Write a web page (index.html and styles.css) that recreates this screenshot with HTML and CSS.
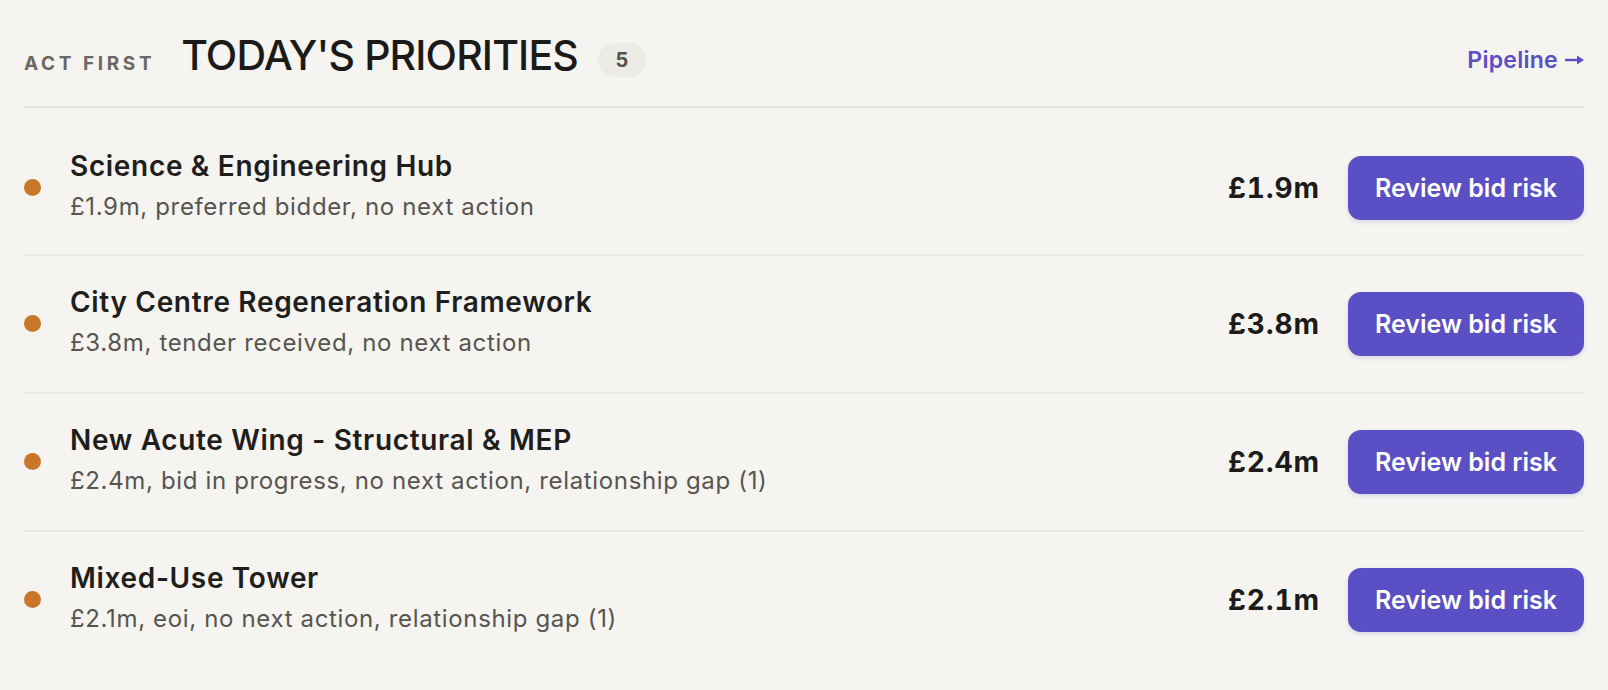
FILE: index.html
```html
<!DOCTYPE html>
<html lang="en">
<head>
<meta charset="utf-8">
<title>Today's priorities</title>
<link rel="stylesheet" href="styles.css">
</head>
<body>
<section class="panel">
  <header class="panel-head">
    <div class="head-left">
      <span class="eyebrow">ACT FIRST</span>
      <h2 class="title">TODAY'S PRIORITIES</h2>
      <span class="count">5</span>
    </div>
    <a class="link" href="#">Pipeline<svg class="arrow" width="19" height="12" viewBox="0 0 19 12" aria-hidden="true"><path d="M0 6 H13" stroke="currentColor" stroke-width="2.4" fill="none"/><path d="M12 1.5 L19 6 L12 10.5 Z" fill="currentColor"/></svg></a>
  </header>
  <ul class="list">
    <li class="row">
      <span class="dot"></span>
      <div class="info">
        <div class="name">Science &amp; Engineering Hub</div>
        <div class="meta">£1.9m, preferred bidder, no next action</div>
      </div>
      <span class="amount">£1.9m</span>
      <button class="btn">Review bid risk</button>
    </li>
    <li class="row">
      <span class="dot"></span>
      <div class="info">
        <div class="name">City Centre Regeneration Framework</div>
        <div class="meta">£3.8m, tender received, no next action</div>
      </div>
      <span class="amount">£3.8m</span>
      <button class="btn">Review bid risk</button>
    </li>
    <li class="row">
      <span class="dot"></span>
      <div class="info">
        <div class="name">New Acute Wing - Structural &amp; MEP</div>
        <div class="meta">£2.4m, bid in progress, no next action, relationship gap (1)</div>
      </div>
      <span class="amount">£2.4m</span>
      <button class="btn">Review bid risk</button>
    </li>
    <li class="row">
      <span class="dot"></span>
      <div class="info">
        <div class="name">Mixed-Use Tower</div>
        <div class="meta">£2.1m, eoi, no next action, relationship gap (1)</div>
      </div>
      <span class="amount">£2.1m</span>
      <button class="btn">Review bid risk</button>
    </li>
  </ul>
</section>
</body>
</html>
```
FILE: styles.css
```css
* { box-sizing: border-box; }
html, body { margin: 0; padding: 0; }
body {
  background: #f5f4f0;
  font-family: Inter, "Noto Sans", sans-serif;
  color: #1f1e1c;
  width: 1608px;
  height: 690px;
  overflow: hidden;
}
.panel { padding: 0 24px; }
.panel-head {
  display: flex;
  align-items: center;
  justify-content: space-between;
  padding: 31px 0 27px;
  border-bottom: 2px solid #e5e2dc;
}
.head-left {
  display: flex;
  align-items: baseline;
}
.eyebrow {
  font-size: 19px;
  font-weight: 700;
  letter-spacing: 0.19em;
  color: #6b6863;
  margin-right: 26px;
}
.title {
  margin: 0;
  font-size: 41px;
  line-height: 48px;
  font-weight: 500;
  letter-spacing: -0.021em;
  color: #1b1a18;
}
.count {
  align-self: center;
  margin: 10px 0 0 20px;
  width: 48px;
  height: 34px;
  border-radius: 17px;
  background: #ecebe6;
  color: #55524d;
  font-size: 20px;
  font-weight: 700;
  display: flex;
  align-items: center;
  justify-content: center;
}
.link {
  display: flex;
  align-items: center;
  gap: 7px;
  color: #5a4fc4;
  font-size: 23px;
  font-weight: 600;
  text-decoration: none;
  letter-spacing: 0.012em;
  margin-top: 10px;
}
.arrow { display: block; }
.list {
  list-style: none;
  margin: 11px 0 0;
  padding: 0;
}
.row {
  display: flex;
  align-items: center;
  padding: 28px 0 29px;
  border-bottom: 2px solid #ebe9e3;
}
.row:first-child { padding-top: 29px; padding-bottom: 27px; }
.row:last-child { border-bottom: none; }
.dot {
  width: 17px;
  height: 17px;
  border-radius: 50%;
  background: #c8762a;
  flex: none;
}
.info {
  flex: 1;
  margin: 0 0 3px 29px;
  display: flex;
  flex-direction: column;
  gap: 6px;
}
.name {
  font-size: 28px;
  line-height: 36px;
  font-weight: 600;
  letter-spacing: 0.024em;
  color: #1f1e1c;
}
.meta {
  font-size: 24px;
  line-height: 34px;
  letter-spacing: 0.027em;
  color: #57544f;
}
.amount {
  font-size: 28px;
  font-weight: 700;
  color: #1c1b19;
  margin-right: 28px;
  letter-spacing: 0.035em;
  font-variant-numeric: tabular-nums;
}
.btn {
  width: 236px;
  height: 64px;
  border: none;
  border-radius: 13px;
  background: #5a4fc4;
  color: #fff;
  font-family: inherit;
  font-size: 25px;
  font-weight: 600;
  letter-spacing: 0;
  box-shadow: 0 2px 4px rgba(90, 79, 196, 0.18);
}
```
